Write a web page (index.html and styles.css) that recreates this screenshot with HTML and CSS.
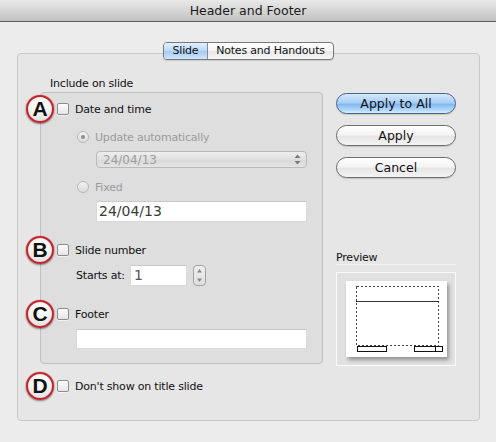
FILE: index.html
```html
<!DOCTYPE html>
<html>
<head>
<meta charset="utf-8">
<link rel="stylesheet" href="styles.css">
</head>
<body>
<div class="window">
  <div class="titlebar">Header and Footer</div>
  <div class="main">
    <div class="tabs">
      <span class="tab sel">Slide</span>
      <span class="tab other">Notes and Handouts</span>
    </div>
    <div class="panel">
      <div class="left">
        <div class="caption">Include on slide</div>
        <div class="group">
          <div class="row row-a"><span class="badge">A</span><span class="cb"></span><span>Date and time</span></div>
          <div class="row sub r1"><span class="radio on"></span><span class="dis">Update automatically</span></div>
          <div class="popup"><span>24/04/13</span>
            <svg class="updown" width="7" height="11" viewBox="0 0 7 11"><polygon points="0.5,4 3.5,0.5 6.5,4" fill="#7a7a7a"/><polygon points="0.5,7 3.5,10.5 6.5,7" fill="#7a7a7a"/></svg>
          </div>
          <div class="row sub r2"><span class="radio"></span><span class="dis">Fixed</span></div>
          <div class="field fixed">24/04/13</div>
          <div class="row row-b"><span class="badge">B</span><span class="cb"></span><span>Slide number</span></div>
          <div class="starts">
            <span class="starts-label">Starts at:</span>
            <span class="field num">1</span>
            <span class="stepper">
              <svg width="11" height="19" viewBox="0 0 11 19"><polygon points="3,6.5 5.5,3 8,6.5" fill="#8a8a8a"/><polygon points="3,12.5 5.5,16 8,12.5" fill="#8a8a8a"/></svg>
            </span>
          </div>
          <div class="row row-c"><span class="badge">C</span><span class="cb"></span><span>Footer</span></div>
          <div class="field footer"></div>
        </div>
        <div class="row row-d"><span class="badge">D</span><span class="cb"></span><span>Don't show on title slide</span></div>
      </div>
      <div class="right">
        <div class="btn default">Apply to All</div>
        <div class="btn">Apply</div>
        <div class="btn">Cancel</div>
        <div class="preview-label">Preview</div>
        <div class="preview-box">
          <div class="paper">
            <svg width="101" height="76" viewBox="0 0 101 76" shape-rendering="crispEdges">
              <rect x="10.5" y="5.5" width="82" height="59" fill="none" stroke="#444" stroke-width="1" stroke-dasharray="2,2"/>
              <line x1="10" y1="20.5" x2="93" y2="20.5" stroke="#333" stroke-width="1"/>
              <rect x="11.5" y="65.5" width="29" height="5" fill="#fff" stroke="#111" stroke-width="1"/>
              <rect x="68.5" y="65.5" width="28" height="5" fill="#fff" stroke="#111" stroke-width="1"/>
              <line x1="89.5" y1="65" x2="89.5" y2="71" stroke="#111" stroke-width="1"/>
            </svg>
          </div>
        </div>
      </div>
    </div>
  </div>
</div>
</body>
</html>
```

FILE: styles.css
```css
* { box-sizing: border-box; }
body {
  margin: 0;
  background: #ececec;
  font-family: "DejaVu Sans", sans-serif;
  font-size: 11px;
  letter-spacing: -0.2px;
  color: #111;
}
.window { width: 496px; height: 442px; overflow: hidden; }
.titlebar {
  height: 22px;
  background: linear-gradient(#e9e9e9, #c2c2c2);
  border-bottom: 1px solid #5f5f5f;
  text-align: center;
  font-size: 12.5px;
  letter-spacing: 0;
  line-height: 21px;
  color: #1a1a1a;
}
.main { padding: 20px 16px 0 17px; }
.tabs {
  display: flex;
  width: max-content;
  margin: 0 auto -7px;
  position: relative;
  z-index: 1;
  height: 18px;
  border: 1px solid #787878;
  border-radius: 4px;
  overflow: hidden;
  background: linear-gradient(#ffffff, #f4f4f4 50%, #e8e8e8 51%, #f6f6f6);
  box-shadow: 0 1px 1px rgba(0,0,0,.12);
}
.tab { line-height: 16px; text-align: center; }
.tab.sel {
  width: 43px;
  background: linear-gradient(#e3f0fd, #b9d8f7 50%, #a3cbf3 51%, #cfe5fb);
}
.tab.other { width: 126px; border-left: 1px solid #8a8a8a; }
.panel {
  height: 368px;
  border: 1px solid #c9c9c9;
  border-radius: 4px;
  background: #e6e6e6;
  display: grid;
  grid-template-columns: 305px 120px;
  column-gap: 13px;
  align-items: start;
}
.caption { margin-top: 23px; line-height: 14px; padding-left: 32px; }
.group {
  margin: 1px 0 0 22px;
  width: 283px;
  height: 272px;
  border: 1px solid #c0c0c0;
  border-radius: 4px;
  background: #dedede;
  padding: 0 15px 0 16px;
  display: flex;
  flex-direction: column;
  align-items: flex-start;
}
.row {
  display: flex;
  align-items: center;
  height: 20px;
  position: relative;
  gap: 6px;
}
.row-a { margin-top: 6px; }
.r1 { margin-top: 8px; }
.r2 { margin-top: 9px; }
.row-b { margin-top: 18px; }
.row-c { margin-top: 18px; }
.row-d { margin-top: 12px; margin-left: 39px; }
.sub { margin-left: 20px; }
.dis { color: #9b9b9b; }
.cb {
  width: 12px;
  height: 12px;
  border: 1px solid #8c8c8c;
  border-radius: 2px;
  background: linear-gradient(#fdfdfd, #e6e6e6);
  box-shadow: 0 1px 0 rgba(255,255,255,.6);
}
.radio {
  width: 12px;
  height: 12px;
  border-radius: 50%;
  border: 1px solid #b6b6b6;
  background: linear-gradient(#f2f2f2, #dcdcdc);
  position: relative;
}
.radio.on::after {
  content: "";
  position: absolute;
  left: 3px;
  top: 3px;
  width: 4px;
  height: 4px;
  border-radius: 50%;
  background: #8e8e8e;
}
.badge {
  position: absolute;
  left: -31px;
  top: -4px;
  width: 28px;
  height: 28px;
  border-radius: 50%;
  border: 2px solid #c4232a;
  background: radial-gradient(circle at 50% 35%, #ffffff 0%, #f5f5f5 45%, #d2d2d2 100%);
  box-shadow: 0 1px 2px rgba(0,0,0,.45), 0 0 1px rgba(196,35,42,.6);
  font-family: "Liberation Sans", Arial, sans-serif;
  font-weight: bold;
  font-size: 21px;
  letter-spacing: 0;
  line-height: 24px;
  text-align: center;
  color: #111;
}
.popup {
  margin-top: 4px;
  margin-left: 39px;
  width: 211px;
  height: 17px;
  border: 1px solid #b9b9b9;
  border-radius: 4px;
  background: linear-gradient(#eeeeee, #e0e0e0 50%, #d8d8d8 51%, #e4e4e4);
  display: flex;
  align-items: center;
  justify-content: space-between;
  padding: 0 5px 0 6px;
  font-size: 12px;
  letter-spacing: 0;
  color: #9d9d9d;
}
.field {
  background: #fff;
  border: 1px solid #dadada;
  border-top-color: #cacaca;
  font-size: 14px;
  letter-spacing: 0;
  color: #3a3a3a;
}
.fixed {
  margin-top: 4px;
  margin-left: 39px;
  width: 211px;
  height: 21px;
  line-height: 19px;
  padding-left: 2px;
}
.starts {
  margin-top: 5px;
  margin-left: 19px;
  display: flex;
  align-items: center;
  height: 21px;
}
.starts-label { width: 54px; }
.num {
  width: 57px;
  height: 21px;
  line-height: 19px;
  padding-left: 3px;
  color: #555;
}
.stepper {
  margin-left: 6px;
  width: 13px;
  height: 21px;
  border: 1px solid #a2a2a2;
  border-radius: 4px;
  background: linear-gradient(#f0f0f0, #dedede);
  display: flex;
}
.footer {
  margin-top: 5px;
  margin-left: 19px;
  width: 231px;
  height: 20px;
}
.right {
  margin-top: 39px;
  display: flex;
  flex-direction: column;
}
.btn {
  height: 21px;
  border-radius: 11px;
  border: 1px solid #6e6e6e;
  background: linear-gradient(#ffffff 0%, #f5f5f5 45%, #e6e6e6 55%, #f4f4f4 100%);
  font-size: 12.5px;
  letter-spacing: 0;
  text-align: center;
  line-height: 19px;
  color: #111;
  box-shadow: 0 1px 1px rgba(0,0,0,.15);
  margin-bottom: 11px;
}
.btn.default {
  border-color: #45648f;
  background: linear-gradient(#d6e8fc 0%, #a9cff6 45%, #85baf0 55%, #b3d8fb 85%, #d8eeff 100%);
}
.preview-label {
  margin-top: 62px;
  line-height: 13px;
  padding-left: 0;
  border-bottom: 1px solid #f3f3f3;
}
.preview-box {
  margin-top: 7px;
  height: 94px;
  border: 1px solid #fafafa;
  background: #e1e1e1;
  padding: 8px 0 0 9px;
}
.paper {
  width: 101px;
  height: 76px;
  background: #fff;
  box-shadow: 2px 3px 4px rgba(0,0,0,.35);
}
.paper svg { display: block; }
```
